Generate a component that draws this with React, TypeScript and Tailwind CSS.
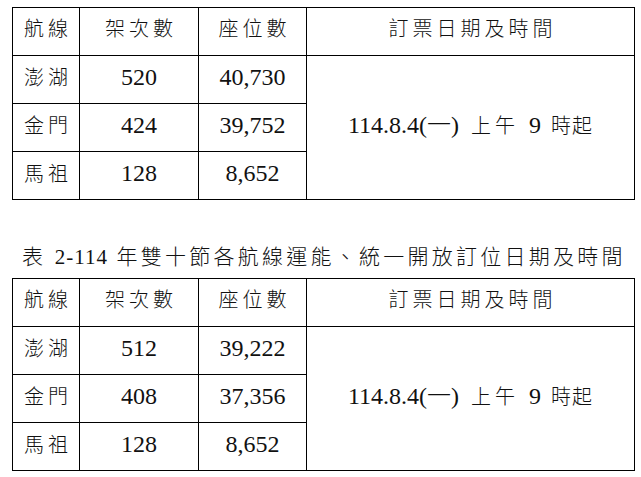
import React from 'react';

type Row = { route: string; flights: string; seats: string };

const table1: Row[] = [
  { route: '澎湖', flights: '520', seats: '40,730' },
  { route: '金門', flights: '424', seats: '39,752' },
  { route: '馬祖', flights: '128', seats: '8,652' },
];

const table2: Row[] = [
  { route: '澎湖', flights: '512', seats: '39,222' },
  { route: '金門', flights: '408', seats: '37,356' },
  { route: '馬祖', flights: '128', seats: '8,652' },
];

const font = "font-['Liberation_Serif','Noto_Sans_CJK_TC',serif]";

const Cjk: React.FC<{ text: string; className?: string }> = ({ text, className }) => (
  <span className={`text-[20px] font-light tracking-[4px] -mr-[4px] ${className ?? ''}`}>{text}</span>
);

const RouteTable: React.FC<{ rows: Row[] }> = ({ rows }) => (
  <table className="w-[623px] table-fixed border-collapse text-[#111]">
    <colgroup>
      <col className="w-[67px]" />
      <col className="w-[119px]" />
      <col className="w-[108px]" />
      <col />
    </colgroup>
    <thead>
      <tr className="h-[48px]">
        <th className="border border-black font-normal text-center pb-[6px]"><Cjk text="航線" /></th>
        <th className="border border-black font-normal text-center pb-[6px]"><Cjk text="架次數" /></th>
        <th className="border border-black font-normal text-center pb-[6px]"><Cjk text="座位數" /></th>
        <th className="border border-black font-normal text-center pb-[6px]"><Cjk text="訂票日期及時間" /></th>
      </tr>
    </thead>
    <tbody>
      {rows.map((r, i) => (
        <tr key={r.route} className="h-[48px]">
          <td className="border border-black text-center pb-[4px]"><Cjk text={r.route} /></td>
          <td className="border border-black text-center text-[24px] pb-[6px]">{r.flights}</td>
          <td className="border border-black text-center text-[24px] pb-[6px]">{r.seats}</td>
          {i === 0 && (
            <td rowSpan={3} className="border border-black text-center text-[24px] pb-[6px] whitespace-nowrap">
              114.8.4(<span className="font-light">一</span>)
              <span className="ml-[12px] text-[20px] font-light tracking-[4px]">上午</span>
              <span className="ml-[10px]">9</span>
              <span className="ml-[10px] text-[20px] font-light tracking-[1px]">時起</span>
            </td>
          )}
        </tr>
      ))}
    </tbody>
  </table>
);

export default function App() {
  return (
    <div className={`min-h-[477px] bg-white pt-[7px] pl-[12px] ${font}`}>
      <RouteTable rows={table1} />
      <div className="mt-[42px] mb-[6px] h-[30px] leading-[30px] text-[21px] font-light tracking-[3.25px] text-[#111] whitespace-nowrap pl-[10px]">
        表 <span className="font-normal tracking-[1px]">2-114</span> 年雙十節各航線運能、統一開放訂位日期及時間
      </div>
      <RouteTable rows={table2} />
    </div>
  );
}
